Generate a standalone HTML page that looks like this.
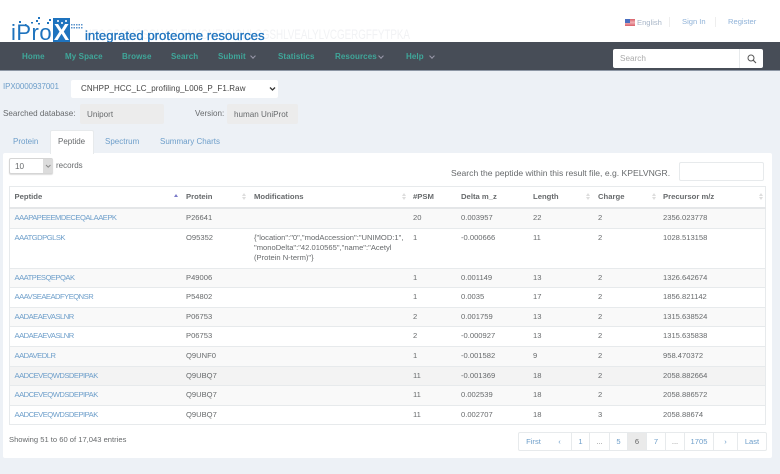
<!DOCTYPE html>
<html><head><meta charset="utf-8"><title>iProX</title>
<style>
html,body{margin:0;padding:0}
body{width:780px;height:474px;overflow:hidden;background:#edf1f6;position:relative;font-family:"Liberation Sans",sans-serif;font-size:8px;color:#676a6c}
#w{position:absolute;left:0;top:0;width:780px;height:474px;filter:blur(.25px)}
.a{position:absolute;white-space:nowrap}
a{color:#6d9eca;text-decoration:none;letter-spacing:-.5px}
#top{left:0;top:0;width:780px;height:42px;background:#fff}
#nav{left:0;top:42px;width:780px;height:28px;background:#474d57;border-bottom:1px solid #8d97a5}
.n{top:52px;color:#3fa79a;font-weight:bold;font-size:8px;letter-spacing:.1px}
.car{position:absolute;top:54px;width:3px;height:3px;border-right:1px solid #99a;border-bottom:1px solid #99a;transform:rotate(45deg)}
.t{font-size:7.6px;color:#6d9eca}
#panel{left:3px;top:153px;width:769px;height:305px;background:#fff;border-radius:2px}
table{position:absolute;left:9px;top:186px;width:757px;border-collapse:collapse;table-layout:fixed;background:#fff;font-size:7.6px;border:1px solid #e7eaec}
th,td{padding:0 0 0 4.5px;border-top:1px solid #e7eaec;text-align:left;vertical-align:top;overflow:hidden;white-space:nowrap}
th{height:20px;line-height:20px;font-weight:bold;color:#676a6c;border-bottom:2px solid #e4e6e8;font-size:7.7px}
td{height:18.6px;line-height:18.6px}
tr.s td{background:#f9f9f9}
tr.h td{background:#f3f3f3}
.tall td{height:39px}
.tall td.m{line-height:10px;padding-top:4px;height:35px}
.sort{position:absolute;width:0;height:0;border-left:2px solid transparent;border-right:2px solid transparent}
.up{top:193px;border-bottom:3px solid #ddd}
.dn{top:197px;border-top:3px solid #ddd}
.pg{position:absolute;top:432px;height:17px;line-height:17px;text-align:center;color:#6d9eca;border-right:1px solid #e7eaec;border-top:1px solid #e7eaec;border-bottom:1px solid #e7eaec;background:#fff;font-size:7.6px}
</style></head><body><div id="w">
<div class="a" id="top"></div>

<div class="a" style="right:370px;top:26px;font-size:14px;line-height:16px;color:#f1f2f4;transform:scaleX(.7);transform-origin:right center">HEQGSGNGSGLYGLENYCNFVNQHLCGSHLVEALYLVCGERGFFYTPKA</div>
<div class="a" style="left:53px;top:18px;width:17px;height:24px;background:#1e73be"></div>
<div class="a" style="left:11px;top:22px;font-size:22px;line-height:22px;color:#1e73be;letter-spacing:.5px">iPro</div>
<div class="a" style="left:53px;top:21px;width:17px;text-align:center;font-size:23px;line-height:22px;color:#fff;font-weight:bold">X</div>
<svg class="a" style="left:15px;top:15px" width="70" height="18"><g fill="#1e73be"><rect x="4" y="6" width="2" height="2"/><rect x="16" y="7" width="2" height="1.5"/><rect x="21" y="5" width="2" height="2"/><rect x="23" y="2" width="2" height="2"/><rect x="23" y="8" width="2" height="1.5"/><rect x="32" y="7" width="2" height="2"/><rect x="34" y="4" width="2" height="2"/><rect x="10" y="9" width="1.5" height="1.5"/></g><g fill="#cfe0f2"><rect x="42" y="5" width="2" height="2"/><rect x="46" y="7" width="2" height="2"/><rect x="50" y="5" width="2" height="2"/></g><g fill="#5a93cc"><rect x="56" y="9" width="1.5" height="1.5"/><rect x="58.5" y="9" width="1.5" height="1.5"/><rect x="61" y="9" width="1.5" height="1.5"/><rect x="63.5" y="9" width="1.5" height="1.5"/><rect x="66" y="9" width="1.5" height="1.5"/><rect x="56" y="12" width="1.5" height="1.5"/><rect x="58.5" y="12" width="1.5" height="1.5"/><rect x="61" y="12" width="1.5" height="1.5"/><rect x="63.5" y="12" width="1.5" height="1.5"/><rect x="66" y="12" width="1.5" height="1.5"/></g></svg>
<div class="a" style="left:85px;top:29px;font-size:13.2px;line-height:14px;color:#1e73be;-webkit-text-stroke:.3px #1e73be">integrated proteome resources</div>

<div class="a" style="left:625px;top:19px;width:10px;height:6.5px;background:linear-gradient(#d9606a,#f0b0b4 50%,#d9606a)"></div>
<div class="a" style="left:625px;top:19px;width:5px;height:3.5px;background:#4a6fc0"></div>
<div class="a t" style="left:637px;top:18px;color:#a8b6c8">English</div>
<div class="a" style="left:669px;top:17px;width:1px;height:10px;background:#eee"></div>
<div class="a t" style="left:682px;top:17px;color:#8fb2d8">Sign In</div>
<div class="a" style="left:715px;top:17px;width:1px;height:10px;background:#eee"></div>
<div class="a t" style="left:728px;top:17px;color:#8fb2d8">Register</div>

<div class="a" id="nav"></div>
<div class="a n" style="left:22px">Home</div>
<div class="a n" style="left:65px">My Space</div>
<div class="a n" style="left:122px">Browse</div>
<div class="a n" style="left:171px">Search</div>
<div class="a n" style="left:218px">Submit</div><i class="car" style="left:251px"></i>
<div class="a n" style="left:278px">Statistics</div>
<div class="a n" style="left:335px">Resources</div><i class="car" style="left:379px"></i>
<div class="a n" style="left:406px">Help</div><i class="car" style="left:430px"></i>

<div class="a" style="left:613px;top:49px;width:150px;height:19px;background:#fff;border-radius:2px"></div>
<div class="a" style="left:739px;top:49px;width:1px;height:19px;background:#e7eaec"></div>
<div class="a" style="left:620px;top:54px;font-size:8.2px;color:#aaa">Search</div>
<svg class="a" style="left:747px;top:54px" width="10" height="10"><circle cx="4" cy="4" r="3" fill="none" stroke="#555" stroke-width="1"/><path d="M6.2 6.2L9 9" stroke="#555" stroke-width="1.1"/></svg>

<div class="a" style="left:3px;top:82px;font-size:8px;letter-spacing:-.12px;color:#6d9eca">IPX0000937001</div>
<div class="a" style="left:71px;top:80px;width:207px;height:18px;background:#fff;border-radius:2px"></div>
<div class="a" style="left:81px;top:84px;font-size:8px;letter-spacing:.1px;color:#444">CNHPP_HCC_LC_profiling_L006_P_F1.Raw</div>
<svg class="a" style="left:269px;top:86px" width="7" height="6"><path d="M1 1.5L3.5 4L6 1.5" fill="none" stroke="#333" stroke-width="1.3"/></svg>

<div class="a" style="left:3px;top:109px;font-size:8.1px">Searched database:</div>
<div class="a" style="left:80px;top:104px;width:84px;height:20px;background:#ececec;border-radius:2px"></div>
<div class="a" style="left:87px;top:110px;font-size:8.1px">Uniport</div>
<div class="a" style="left:195px;top:109px;font-size:8.1px">Version:</div>
<div class="a" style="left:227px;top:104px;width:71px;height:20px;background:#ececec;border-radius:2px"></div>
<div class="a" style="left:234px;top:110px;font-size:8.1px">human UniProt</div>

<div class="a" id="panel"></div>
<div class="a" style="left:50px;top:130px;width:44px;height:24px;background:#fff;border:1px solid #e7eaec;border-bottom:0;border-radius:2px 2px 0 0;box-sizing:border-box"></div>
<div class="a t" style="left:13px;top:137px;font-size:8px">Protein</div>
<div class="a" style="left:58px;top:137px;font-size:8px;color:#676a6c">Peptide</div>
<div class="a t" style="left:105px;top:137px;font-size:8px">Spectrum</div>
<div class="a t" style="left:160px;top:137px;font-size:8px">Summary Charts</div>

<div class="a" style="left:9px;top:158px;width:44px;height:16px;box-sizing:border-box;background:#fff;border:1px solid #d5d5d5;border-radius:2px;box-shadow:0 1px 1px #ddd"></div>
<div class="a" style="left:43px;top:159px;width:10px;height:14px;background:#dcdcdc"></div>
<svg class="a" style="left:45px;top:164px" width="7" height="5"><path d="M1 1L3.2 3.2L5.5 1" fill="none" stroke="#888"/></svg>
<div class="a" style="left:15px;top:162px;font-size:8.2px">10</div>
<div class="a" style="left:56px;top:161px;font-size:8px">records</div>

<div class="a" style="left:451px;top:168px;font-size:8.6px">Search the peptide within this result file, e.g. KPELVNGR.</div>
<div class="a" style="left:679px;top:162px;width:85px;height:19px;box-sizing:border-box;background:#fff;border:1px solid #e7eaec;border-radius:2px"></div>

<table>
<colgroup><col style="width:172px"><col style="width:68px"><col style="width:159px"><col style="width:48px"><col style="width:72px"><col style="width:65px"><col style="width:65px"><col></colgroup>
<tr><th>Peptide</th><th>Protein</th><th>Modifications</th><th>#PSM</th><th>Delta m_z</th><th>Length</th><th>Charge</th><th>Precursor m/z</th></tr>
<tr class="s"><td><a>AAAPAPEEEMDECEQALAAEPK</a></td><td>P26641</td><td></td><td>20</td><td>0.003957</td><td>22</td><td>2</td><td>2356.023778</td></tr>
<tr class="tall"><td><a>AAATGDPGLSK</a></td><td>O95352</td><td class="m">{"location":"0","modAccession":"UNIMOD:1",<br>"monoDelta":"42.010565","name":"Acetyl<br>(Protein N-term)"}</td><td>1</td><td>-0.000666</td><td>11</td><td>2</td><td>1028.513158</td></tr>
<tr class="s"><td><a>AAATPESQEPQAK</a></td><td>P49006</td><td></td><td>1</td><td>0.001149</td><td>13</td><td>2</td><td>1326.642674</td></tr>
<tr><td><a>AAAVSEAEADFYEQNSR</a></td><td>P54802</td><td></td><td>1</td><td>0.0035</td><td>17</td><td>2</td><td>1856.821142</td></tr>
<tr class="s"><td><a>AADAEAEVASLNR</a></td><td>P06753</td><td></td><td>2</td><td>0.001759</td><td>13</td><td>2</td><td>1315.638524</td></tr>
<tr><td><a>AADAEAEVASLNR</a></td><td>P06753</td><td></td><td>2</td><td>-0.000927</td><td>13</td><td>2</td><td>1315.635838</td></tr>
<tr class="s"><td><a>AADAVEDLR</a></td><td>Q9UNF0</td><td></td><td>1</td><td>-0.001582</td><td>9</td><td>2</td><td>958.470372</td></tr>
<tr class="h"><td><a>AADCEVEQWDSDEPIPAK</a></td><td>Q9UBQ7</td><td></td><td>11</td><td>-0.001369</td><td>18</td><td>2</td><td>2058.882664</td></tr>
<tr class="s"><td><a>AADCEVEQWDSDEPIPAK</a></td><td>Q9UBQ7</td><td></td><td>11</td><td>0.002539</td><td>18</td><td>2</td><td>2058.886572</td></tr>
<tr><td><a>AADCEVEQWDSDEPIPAK</a></td><td>Q9UBQ7</td><td></td><td>11</td><td>0.002707</td><td>18</td><td>3</td><td>2058.88674</td></tr>
</table>
<i class="sort" style="left:174px;top:194px;border-bottom:3px solid #7a7ac8"></i>
<i class="sort up" style="left:242px"></i><i class="sort dn" style="left:242px"></i>
<i class="sort up" style="left:402px"></i><i class="sort dn" style="left:402px"></i>
<i class="sort up" style="left:586px"></i><i class="sort dn" style="left:586px"></i>
<i class="sort up" style="left:652px"></i><i class="sort dn" style="left:652px"></i>
<i class="sort up" style="left:759px"></i><i class="sort dn" style="left:759px"></i>

<div class="a" style="left:9px;top:435px;font-size:7.6px">Showing 51 to 60 of 17,043 entries</div>
<div class="pg" style="left:518px;width:29px;border-left:1px solid #e7eaec;border-radius:2px 0 0 2px">First</div>
<div class="pg" style="left:548px;width:23px">&#8249;</div>
<div class="pg" style="left:572px;width:17px">1</div>
<div class="pg" style="left:590px;width:19px;color:#888">...</div>
<div class="pg" style="left:610px;width:17px">5</div>
<div class="pg" style="left:628px;width:18px;background:#eaeaea;color:#666">6</div>
<div class="pg" style="left:647px;width:18px">7</div>
<div class="pg" style="left:666px;width:18px;color:#888">...</div>
<div class="pg" style="left:685px;width:28px">1705</div>
<div class="pg" style="left:714px;width:23px">&#8250;</div>
<div class="pg" style="left:738px;width:28px;border-radius:0 2px 2px 0">Last</div>
</div></body></html>
